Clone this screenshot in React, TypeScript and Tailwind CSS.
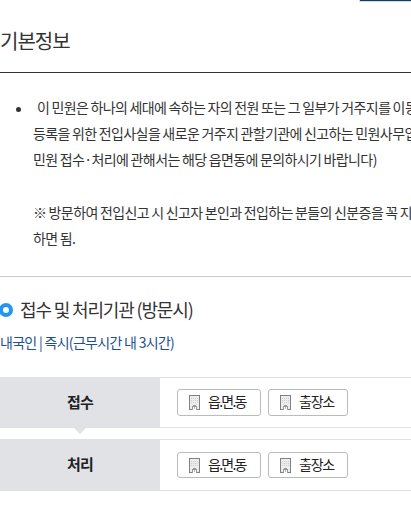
const steps = [
  { label: "접수", places: ["읍.면.동", "출장소"] },
  { label: "처리", places: ["읍.면.동", "출장소"] },
];

function BuildingIcon() {
  return (
    <svg width="11" height="15" viewBox="0 0 11 15" className="shrink-0" shapeRendering="crispEdges">
      <rect x="0.5" y="0.5" width="10" height="14" fill="#ededed" stroke="#808080" />
      <path d="M2 3.5h7M2 5.5h7M2 7.5h7" stroke="#cfcfcf" strokeDasharray="1 1" />
      <path d="M4 10h3v1h1v4H3v-4h1z" fill="#999" />
      <path d="M4 12h3v3H4z" fill="#fff" />
      <path d="M5 12h1v2H5z" fill="#bbb" />
    </svg>
  );
}

function Place({ name }: { name: string }) {
  return (
    <span
      className={`flex items-center rounded-[3px] border border-[#bbb] bg-white pl-[11px] text-[14px] leading-[20px] text-[#222] ${
        name.length > 3 ? "w-[84px] tracking-[-1.75px]" : "w-[80px] tracking-[-1.2px]"
      }`}
    >
      <BuildingIcon />
      <span className="mb-[3px] ml-[8px] whitespace-nowrap">{name}</span>
    </span>
  );
}

export default function App() {
  return (
    <div className="h-[510px] w-[411px] overflow-hidden bg-white font-['Noto_Sans_CJK_KR',sans-serif] text-[14px] tracking-[-0.7px] text-[#333]">
      <div className="ml-auto h-[2px] w-[52px] border-b border-l border-[#d5dae2] bg-[#0f3a6b]" />

      <h2 className="h-[71px] border-b border-[#333] pt-[24px] text-[20px] leading-[30px] tracking-[-1px]">기본정보</h2>

      <div className="flex h-[204px] border-b border-[#ccc] pt-[21px] leading-[26.2px]">
        <span className="mt-[13px] ml-[16px] h-[5px] w-[5px] shrink-0 rounded-full bg-[#333]" />
        <p className="ml-[12px] tracking-[-0.6px] [word-spacing:-0.35px] whitespace-nowrap">
          <span className="ml-[4px]">이 민원은 하나의 세대에 속하는 자의 전원 또는 그 일부가 거주지를 이동</span>
          <br />
          등록을 위한 전입사실을 새로운 거주지 관할기관에 신고하는 민원사무입
          <br />
          민원 접수·처리에 관해서는 해당 읍면동에 문의하시기 바랍니다)
          <br />
          <br />
          ※ 방문하여 전입신고 시 신고자 본인과 전입하는 분들의 신분증을 꼭 지참
          <br />
          하면 됨.
        </p>
      </div>

      <h3 className="mt-[18px] flex h-[28px] items-center text-[18px] leading-[28px] tracking-[-1.15px] whitespace-nowrap">
        <span className="mt-px -ml-px h-[14px] w-[14px] rounded-full border-4 border-[#2196f3]" />
        <span className="ml-[7px]">접수 및 처리기관 (방문시)</span>
      </h3>
      <p className="mt-[7px] h-[24px] leading-[24px] text-[#1d4f91]">내국인 | 즉시(근무시간 내 3시간)</p>

      <div className="mt-[23px] flex flex-col gap-[11px]">
        {steps.map((step, i) => (
          <div key={step.label} className={`flex border-y border-[#e1e2e6] ${i === 0 ? "h-[51px]" : "h-[52px]"}`}>
            <div className="relative flex w-[160px] items-center justify-center bg-[#e1e2e6] pb-px text-[15px] font-bold tracking-[-0.75px] text-[#222]">
              {step.label}
              {i < steps.length - 1 && (
                <span className="absolute top-full left-[73px] border-x-[7px] border-t-[7px] border-x-transparent border-t-[#e1e2e6]" />
              )}
            </div>
            <div className={`flex gap-[7px] pl-[17px] ${i === 0 ? "pt-[11px] pb-[11px]" : "pt-[12px] pb-[12px]"}`}>
              {step.places.map((name) => (
                <Place key={name} name={name} />
              ))}
            </div>
          </div>
        ))}
      </div>
    </div>
  );
}
